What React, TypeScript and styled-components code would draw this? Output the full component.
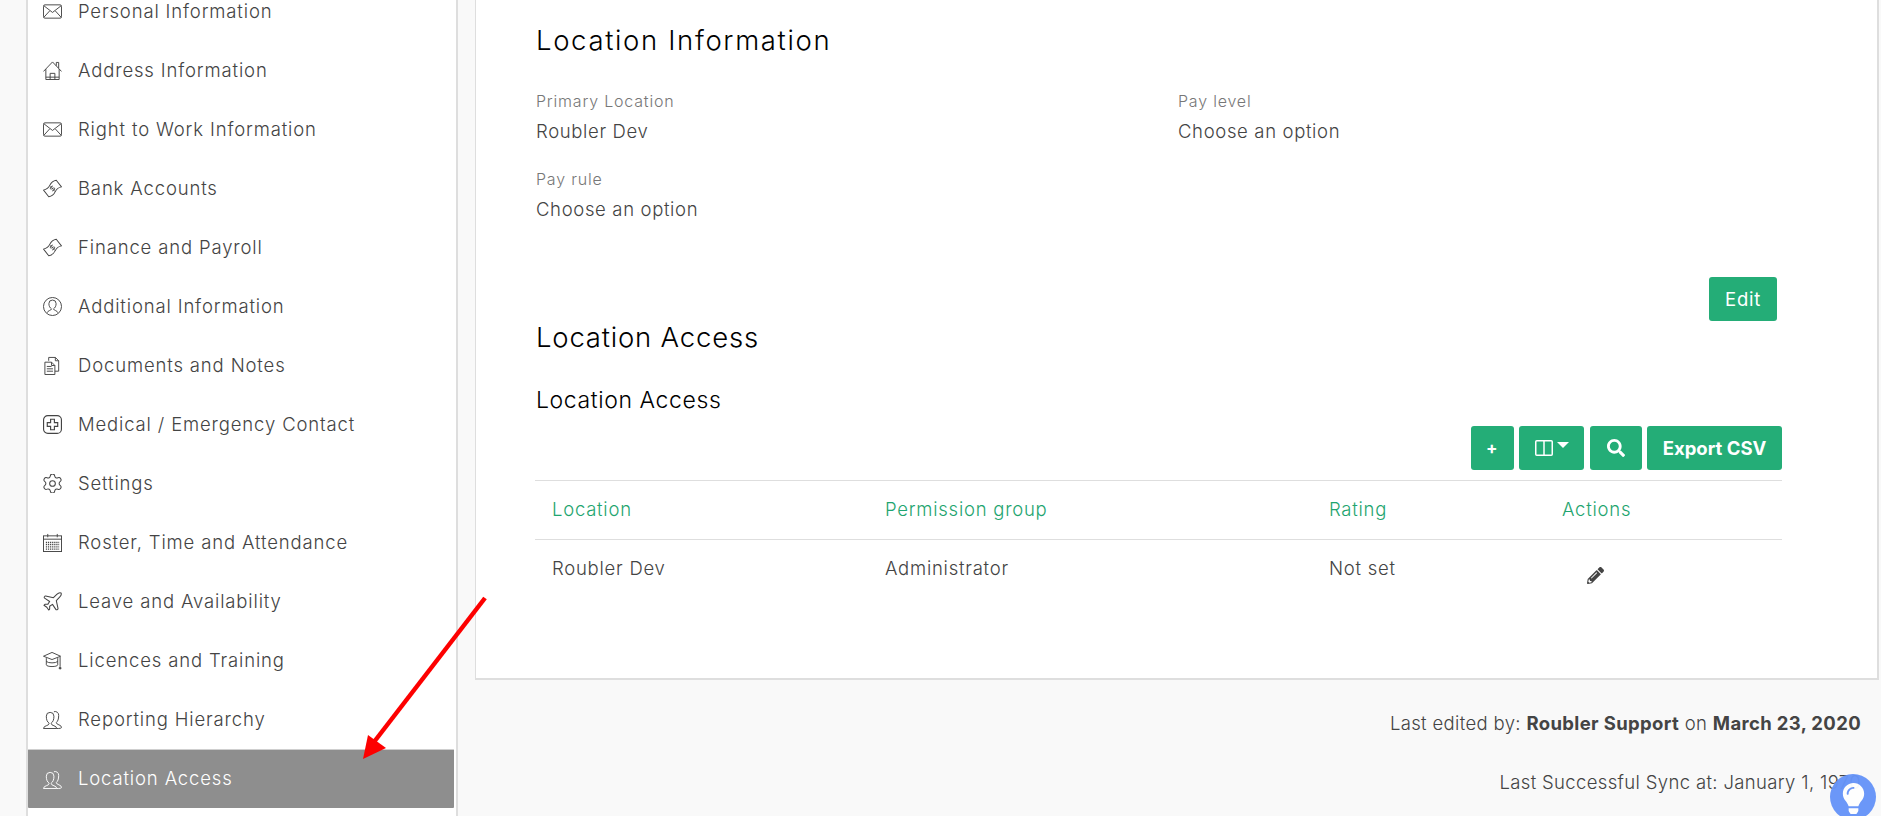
import React from "react";
import styled, { createGlobalStyle } from "styled-components";
import { Settings, Plane } from "lucide-react";
import { FaSearch, FaPencilAlt, FaLightbulb } from "react-icons/fa";

const Global = createGlobalStyle`
  html, body { margin: 0; padding: 0; height: 816px; overflow: hidden; background: #f9f9f9; }
  body { font-family: "Inter", "Liberation Sans", sans-serif; color: #555; }
  * { box-sizing: border-box; }
`;

const Page = styled.div`
  position: relative;
  display: flex;
  align-items: flex-start;
  width: 1881px;
  height: 816px;
  overflow: hidden;
  padding-left: 26px;
`;

const Sidebar = styled.nav`
  flex: 0 0 432px;
  height: 816px;
  background: #fff;
  border-left: 2px solid #dedede;
  border-right: 2px solid #dedede;
  overflow: hidden;
  margin-right: 17px;
`;

const NavList = styled.ul`
  list-style: none;
  margin: -18px 0 0;
  padding: 0;
`;

const NavRow = styled.li<{ $active?: boolean }>`
  display: flex;
  align-items: center;
  gap: 16px;
  height: 59px;
  margin: 0 2px 0 0;
  padding: 0 0 2px 15px;
  font-size: 18.5px;
  font-weight: 300;
  letter-spacing: 0.85px;
  border-radius: 1px;
  color: ${(p) => (p.$active ? "#fff" : "#444")};
  background: ${(p) => (p.$active ? "#8e8e8e" : "transparent")};
  border-top: ${(p) => (p.$active ? "1px solid #cfcfcf" : "0")};
  svg { flex: none; width: 19px; height: 19px; margin-top: 2px; }
`;

const Main = styled.main`
  flex: 1;
  min-width: 0;
  padding-right: 2px;
`;

const Panel = styled.section`
  height: 680px;
  background: #fff;
  border: solid #dedede;
  border-width: 0 2px 2px 1px;
  padding: 0 95px 0 54px;
  display: flex;
  flex-direction: column;
`;

const Heading = styled.h2<{ $top: number; $spacing: number }>`
  margin: ${(p) => p.$top}px 0 0 6px;
  font-size: 27.5px;
  line-height: 34px;
  font-weight: 300;
  letter-spacing: ${(p) => p.$spacing}px;
  color: #000;
`;

const SubHeading = styled.h3`
  margin: 32px 0 0 6px;
  font-size: 23px;
  line-height: 28px;
  font-weight: 300;
  letter-spacing: 0.6px;
  color: #000;
`;

const Fields = styled.div`
  display: grid;
  grid-template-columns: 642px 1fr;
  row-gap: 26px;
  margin: 33px 0 0 6px;
`;

const Field = styled.div`
  display: flex;
  flex-direction: column;
  gap: 8px;
`;

const FieldLabel = styled.span`
  font-size: 16px;
  line-height: 22px;
  font-weight: 300;
  letter-spacing: 0.8px;
  color: #777;
`;

const FieldValue = styled.span`
  font-size: 18.5px;
  line-height: 22px;
  font-weight: 300;
  letter-spacing: 0.65px;
  color: #444;
`;

const EditRow = styled.div`
  display: flex;
  justify-content: flex-end;
  margin: 57px 5px 0 0;
`;

const Button = styled.button<{ $w: number; $bold?: boolean }>`
  display: inline-flex;
  align-items: center;
  justify-content: center;
  gap: 4px;
  width: ${(p) => p.$w}px;
  height: 44px;
  padding: 0;
  border: 0;
  border-radius: 3px;
  background: #24ad77;
  color: #fff;
  font-family: inherit;
  font-size: 18.5px;
  font-weight: ${(p) => (p.$bold ? 700 : 400)};
  letter-spacing: ${(p) => (p.$bold ? 0 : 0.7)}px;
`;

const Toolbar = styled.div`
  display: flex;
  justify-content: flex-end;
  gap: 5.5px;
  margin-top: 12px;
`;

const AddGlyph = styled.span`
  font-size: 17px;
  font-weight: 700;
`;

const Caret = styled.span`
  width: 0;
  height: 0;
  border: solid transparent;
  border-width: 6px 6px 0;
  border-top-color: #fff;
  margin-top: -7px;
`;

const Table = styled.table`
  margin: 10px 0 0 5px;
  width: 1247px;
  table-layout: fixed;
  border-collapse: collapse;
  font-size: 18.5px;
  font-weight: 300;
  letter-spacing: 0.75px;
`;

const HeadCell = styled.th`
  height: 59px;
  padding: 0 0 2px 17px;
  text-align: left;
  font-weight: 300;
  color: #1fa570;
  border-top: 1px solid #dedede;
  border-bottom: 1px solid #dedede;
`;

const BodyCell = styled.td`
  height: 59px;
  padding: 0 0 2px 17px;
  color: #444;
  svg { display: block; margin: 14px 0 0 25px; width: 17px; height: 17px; color: #444; }
`;

const Meta = styled.footer`
  display: flex;
  flex-direction: column;
  align-items: flex-end;
  gap: 37px;
  padding: 32px 18px 0 0;
  font-size: 18.5px;
  font-weight: 300;
  letter-spacing: 0.35px;
  line-height: 22px;
  color: #444;
  b { font-weight: 700; color: #444; }
`;

const Arrow = styled.svg`
  position: absolute;
  left: 0;
  top: 0;
  pointer-events: none;
`;

const Bulb = styled.div`
  position: absolute;
  left: 1830px;
  top: 774px;
  width: 46px;
  height: 46px;
  border-radius: 50%;
  background: #6694f8;
  opacity: 0.96;
  display: flex;
  align-items: center;
  justify-content: center;
  color: #fff;
  svg { width: 27px; height: 31px; margin-top: 2px; }
`;

const Svg: React.FC<{ children: React.ReactNode }> = ({ children }) => (
  <svg viewBox="0 0 20 20" fill="none" stroke="currentColor" strokeWidth="1">
    {children}
  </svg>
);

const Mail = () => (
  <Svg>
    <rect x="0.5" y="3" width="19" height="14" rx="1.5" />
    <path d="M1 4l9 7 9-7M1 16l6-6.6M19 16l-6-6.6" />
  </Svg>
);
const House = () => (
  <Svg>
    <path d="M0.5 11L10 1l9.500 10M3 8.500V19.500h14V8.500M14 5V1.500h2.500V7.500M7.500 19.500V13h5v6.500M3 17h14" />
  </Svg>
);
const Money = () => (
  <Svg>
    <g transform="rotate(-38 10 10)">
      <path d="M1.500 5.500c3 1.500 5.500 1.500 8.500 0s5.500-1.500 8.500 0v9c-3-1.500-5.500-1.500-8.500 0s-5.500 1.500-8.500 0z" />
      <path d="M12 8.300c-1-1-4-.8-4 .7s4 .5 4 2-3 1.700-4 .7M10 6.500v7.500" strokeWidth="0.8" />
    </g>
  </Svg>
);
const PersonCircle = () => (
  <Svg>
    <circle cx="10" cy="10" r="9.500" />
    <path d="M4.500 16.500c.5-2.500 4-2 4.500-4-1.700-1-2.800-3-2.800-5.500a3.800 3.800 0 0 1 7.600 0c0 2.500-1.100 4.500-2.800 5.500.5 2 4 1.500 4.500 4" />
  </Svg>
);
const Docs = () => (
  <Svg>
    <path d="M2 19.500V6.500h7l3.500 3.500v9.500zM9 6.500V10h3.500M6 5V1.500h7l3.500 3.500v11h-4M13 1.500V5h3.500" />
    <path d="M4 11h5M4 13.500h6.500M4 16h6.500" />
  </Svg>
);
const Medical = () => (
  <Svg>
    <rect x="0.600" y="0.600" width="18.800" height="18.800" rx="4.500" strokeWidth="1.200" />
    <path d="M8 4.500h4V8h3.500v4H12v3.500H8V12H4.500V8H8z" strokeWidth="1.200" />
  </Svg>
);
const Calendar = () => (
  <Svg>
    <rect x="0.500" y="3" width="19" height="16.500" />
    <path d="M0.500 6.500h19M5 1v3.500M15 1v3.500" />
    <path d="M3 10h14M3 12.300h14M3 14.600h14M3 16.900h14" strokeWidth="1.400" strokeDasharray="1.300 0.900" />
  </Svg>
);
const Cap = () => (
  <Svg>
    <path d="M0.500 5.500L9.500 1.500 18.500 5.500 9.500 9z" />
    <path d="M3.500 7.500V14.500c0 2.500 12 2.500 12 0V7.500M3.500 11c2 2 10 2 12 0M18 6V16.500" />
    <circle cx="18" cy="18" r="1" fill="currentColor" />
  </Svg>
);
const Users = () => (
  <Svg>
    <path d="M0.500 19.500c0-3.500 6-2.500 6-5.500-2-1.500-3-3.500-3-7.500a4 4 0 0 1 8 0c0 4-1 6-3 7.500 0 3 6 2 6 5.500z" />
    <path d="M11.500 1.800a3.800 3.800 0 0 1 5 4c0 4-1 6-2.500 7.500 0 2.500 5.500 2 5.500 5 0 1-2 1.200-5 1.200" />
  </Svg>
);
const Columns = () => (
  <svg viewBox="0 0 18 16" fill="none" stroke="currentColor" strokeWidth="1.500" style={{ width: 18, height: 16 }}>
    <rect x="0.750" y="0.750" width="16.500" height="14.500" rx="1" />
    <path d="M9 1v14" />
  </svg>
);

const lucideSmall = { strokeWidth: 1.1, viewBox: "2 2 20 20" };

const nav: { label: string; icon: React.ReactNode; active?: boolean }[] = [
  { label: "Personal Information", icon: <Mail /> },
  { label: "Address Information", icon: <House /> },
  { label: "Right to Work Information", icon: <Mail /> },
  { label: "Bank Accounts", icon: <Money /> },
  { label: "Finance and Payroll", icon: <Money /> },
  { label: "Additional Information", icon: <PersonCircle /> },
  { label: "Documents and Notes", icon: <Docs /> },
  { label: "Medical / Emergency Contact", icon: <Medical /> },
  { label: "Settings", icon: <Settings {...lucideSmall} /> },
  { label: "Roster, Time and Attendance", icon: <Calendar /> },
  { label: "Leave and Availability", icon: <Plane {...lucideSmall} /> },
  { label: "Licences and Training", icon: <Cap /> },
  { label: "Reporting Hierarchy", icon: <Users /> },
  { label: "Location Access", icon: <Users />, active: true },
];

export default function App() {
  return (
    <>
      <Global />
      <Page>
        <Sidebar>
          <NavList>
            {nav.map((n) => (
              <NavRow key={n.label} $active={n.active}>
                {n.icon}
                <span>{n.label}</span>
              </NavRow>
            ))}
          </NavList>
        </Sidebar>
        <Main>
          <Panel>
            <Heading $top={23} $spacing={1.65}>Location Information</Heading>
            <Fields>
              <Field>
                <FieldLabel>Primary Location</FieldLabel>
                <FieldValue>Roubler Dev</FieldValue>
              </Field>
              <Field>
                <FieldLabel>Pay level</FieldLabel>
                <FieldValue>Choose an option</FieldValue>
              </Field>
              <Field>
                <FieldLabel>Pay rule</FieldLabel>
                <FieldValue>Choose an option</FieldValue>
              </Field>
            </Fields>
            <EditRow>
              <Button $w={68}>Edit</Button>
            </EditRow>
            <Heading $top={-1} $spacing={0.8}>Location Access</Heading>
            <SubHeading>Location Access</SubHeading>
            <Toolbar>
              <Button $w={43} aria-label="Add">
                <AddGlyph>+</AddGlyph>
              </Button>
              <Button $w={65} aria-label="Columns">
                <Columns />
                <Caret />
              </Button>
              <Button $w={52} aria-label="Search">
                <FaSearch size={18} />
              </Button>
              <Button $w={135} $bold>
                Export CSV
              </Button>
            </Toolbar>
            <Table>
              <colgroup>
                <col width={333} />
                <col width={444} />
                <col width={233} />
                <col width={237} />
              </colgroup>
              <thead>
                <tr>
                  <HeadCell>Location</HeadCell>
                  <HeadCell>Permission group</HeadCell>
                  <HeadCell>Rating</HeadCell>
                  <HeadCell>Actions</HeadCell>
                </tr>
              </thead>
              <tbody>
                <tr>
                  <BodyCell>Roubler Dev</BodyCell>
                  <BodyCell>Administrator</BodyCell>
                  <BodyCell>Not set</BodyCell>
                  <BodyCell>
                    <FaPencilAlt />
                  </BodyCell>
                </tr>
              </tbody>
            </Table>
          </Panel>
          <Meta>
            <span>
              Last edited by: <b>Roubler Support</b> on <b>March 23, 2020</b>
            </span>
            <span>Last Successful Sync at: January 1, 1970</span>
          </Meta>
        </Main>
        <Arrow width="1881" height="816" viewBox="0 0 1881 816">
          <path d="M485 598L374 742" stroke="#fd0000" strokeWidth="4.500" fill="none" />
          <path d="M363 759l5-24 18 13z" fill="#fd0000" />
        </Arrow>
        <Bulb>
          <FaLightbulb />
        </Bulb>
      </Page>
    </>
  );
}
